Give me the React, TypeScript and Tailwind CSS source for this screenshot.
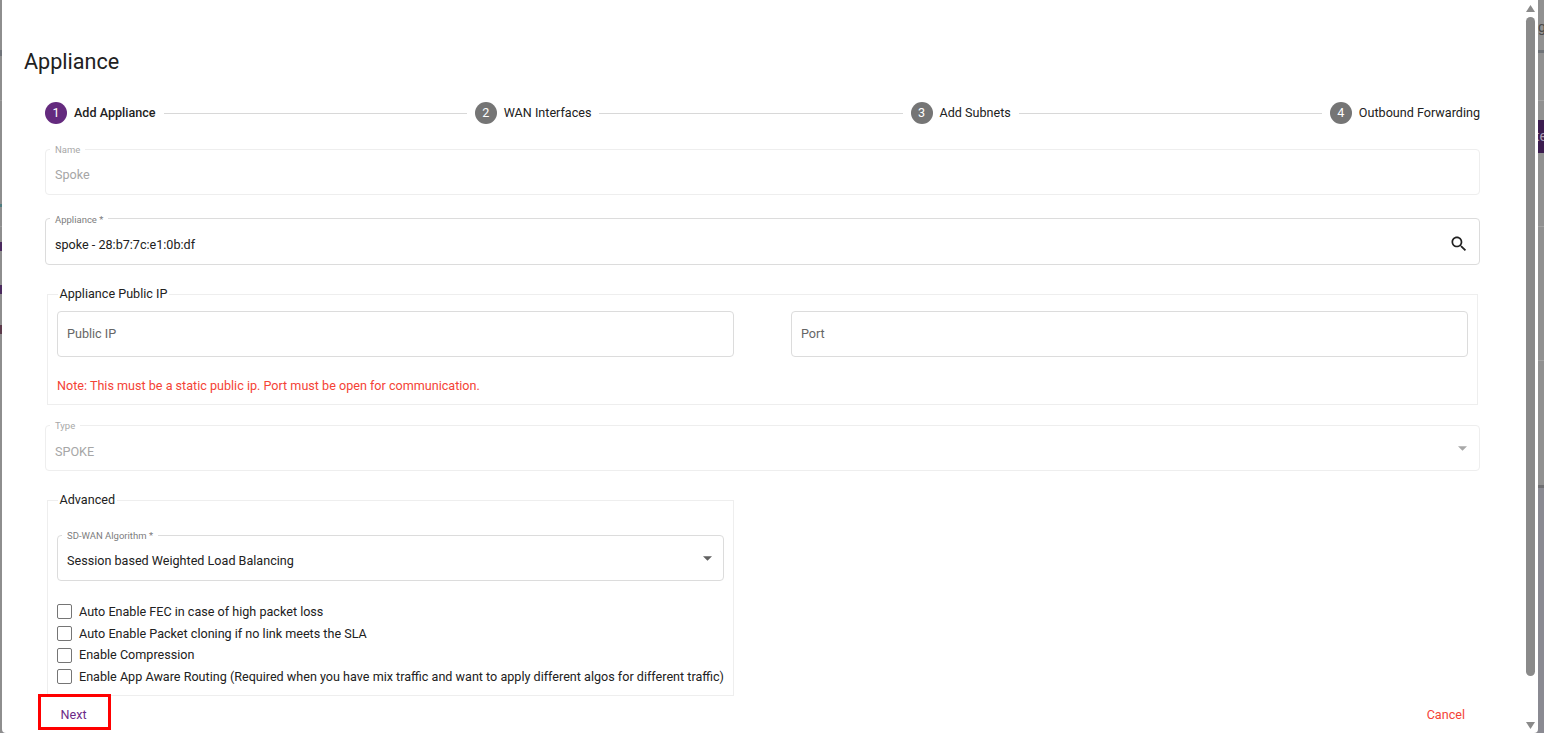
import React from "react";

function Step({ n, label, active }: { n: number; label: string; active?: boolean }) {
  return (
    <div className="flex items-center">
      <div className={active ? "flex h-[22px] w-[22px] items-center justify-center rounded-full bg-[#642a7e] text-[12.6px] text-white" : "flex h-[22px] w-[22px] items-center justify-center rounded-full bg-[#757575] text-[12.6px] text-white"}>{n}</div>
      <span className={active ? "ml-[7px] text-[12.6px] font-medium text-[#1f1f1f]" : "ml-[7px] text-[12.6px] text-[#212121]"}>{label}</span>
    </div>
  );
}

function Line() {
  return <div className="mx-2 h-px flex-1 bg-[#d8d8d8]" />;
}

function Outlined({ label, value, disabled, right, className, valueClass, legendClass }: { label?: string; value: string; disabled?: boolean; right?: React.ReactNode; className?: string; valueClass?: string; legendClass?: string }) {
  return (
    <fieldset className={`flex items-center rounded-[4px] border px-[9px] ${disabled ? "border-[#eeeeee]" : "border-[#dcdcdc]"} ${className ?? ""}`}>
      {label && <legend className={`-ml-[5px] px-[5px] text-[9.5px] leading-[10px] ${legendClass ?? "translate-y-px"} ${disabled ? "text-[#a8a8a8]" : "text-[#7d7d7d]"}`}>{label}</legend>}
      <span className={`flex-1 text-[12.6px] ${valueClass ?? ""} ${disabled ? "text-[#a6a6a6]" : label ? "text-[#212121]" : "text-[#666666]"}`}>{value}</span>
      {right}
    </fieldset>
  );
}

function Check({ label }: { label: string }) {
  return (
    <label className="flex h-[21.7px] items-center">
      <span className="h-[15px] w-[15px] rounded-[2px] border border-[#757575] bg-white" />
      <span className="ml-[7px] whitespace-nowrap pt-px text-[12.6px] text-[#212121]">{label}</span>
    </label>
  );
}

function Caret({ color, className }: { color: string; className?: string }) {
  return (
    <svg width="9" height="5" viewBox="0 0 10 5" className={`shrink-0 ${className ?? ""}`}>
      <path d="M0 0h10L5 5z" fill={color} />
    </svg>
  );
}

export default function App() {
  return (
    <div className="flex h-[733px] w-[1544px] overflow-hidden bg-[#8c8c90] font-['Roboto',sans-serif]">
      <div className="flex h-[733px] w-[2px] shrink-0 flex-col bg-[#8e8e8e]">
        <div className="mt-[50px] h-[6px] bg-[#70747a]" />
        <div className="mt-[44px] h-px bg-[#9c9c9c]" />
        <div className="mt-[103px] h-[3px] bg-[#4f7d80]" />
        <div className="mt-[19px] h-px bg-[#9c9c9c]" />
        <div className="mt-[15px] h-[9px] bg-[#4a2a5e]" />
        <div className="mt-[34px] h-[9px] bg-[#4a2a5e]" />
        <div className="mt-[31px] h-[9px] bg-[#5c3a4a]" />
      </div>
      <div className="flex h-[733px] w-[1536px] shrink-0 rounded-b-[4px] bg-white">
        <main className="w-[1524px] pl-[43px] pr-[46px]">
          <h1 className="-ml-[21px] pt-[47px] text-[21.6px] leading-[30px] text-[#212121]">Appliance</h1>
          <div className="mt-[25px] flex h-[22px] items-center">
            <Step n={1} label="Add Appliance" active />
            <Line />
            <Step n={2} label="WAN Interfaces" />
            <Line />
            <Step n={3} label="Add Subnets" />
            <Line />
            <Step n={4} label="Outbound Forwarding" />
          </div>
          <Outlined label="Name" value="Spoke" disabled valueClass="pt-[2px]" className="mt-[20px] h-[51px]" />
          <Outlined
            label="Appliance *"
            value="spoke - 28:b7:7c:e1:0b:df"
            valueClass="pt-[4px]"
            legendClass="translate-y-[2px]"
            className="mt-[18px] h-[52px]"
            right={
              <svg width="20" height="20" viewBox="0 0 24 24" className="mr-px shrink-0" fill="#212121">
                <path d="M15.5 14h-.79l-.28-.27C15.41 12.59 16 11.11 16 9.5 16 5.91 13.09 3 9.5 3S3 5.91 3 9.5 5.91 16 9.5 16c1.61 0 3.09-.59 4.23-1.57l.27.28v.79l5 4.99L20.49 19l-4.99-5zm-6 0C7.01 14 5 11.99 5 9.5S7.01 5 9.5 5 14 7.01 14 9.5 11.99 14 9.5 14z" />
              </svg>
            }
          />
          <fieldset className="mx-[2px] mt-[22px] h-[118px] border border-[#eeeeee] px-[9px]">
            <legend className="ml-[1px] -translate-y-px px-[1.5px] text-[12.6px] leading-[15px] text-[#212121]">Appliance Public IP</legend>
            <div className="mt-[9px] flex gap-[57px]">
              <Outlined value="Public IP" className="h-[46px] flex-1" />
              <Outlined value="Port" className="h-[46px] flex-1" />
            </div>
            <p className="mt-[21px] text-[12.6px] leading-[16px] text-[#f44336]">Note: This must be a static public ip. Port must be open for communication.</p>
          </fieldset>
          <Outlined label="Type" value="SPOKE" disabled valueClass="pt-[4px]" className="mt-[15px] h-[51px]" right={<Caret color="#a8a8a8" className="mb-[3px] mr-[3px]" />} />
          <fieldset className="mx-[2px] mt-[22px] h-[203px] w-[687px] border border-[#eeeeee] px-[9px]">
            <legend className="ml-[1px] -translate-y-px px-[1.5px] text-[12.6px] leading-[15px] text-[#212121]">Advanced</legend>
            <Outlined label="SD-WAN Algorithm *" value="Session based Weighted Load Balancing" valueClass="pt-[2px]" className="mt-[22px] h-[51px]" right={<Caret color="#616161" className="mb-[4px] mr-[2px]" />} />
            <div className="mt-[20px]">
              <Check label="Auto Enable FEC in case of high packet loss" />
              <Check label="Auto Enable Packet cloning if no link meets the SLA" />
              <Check label="Enable Compression" />
              <Check label="Enable App Aware Routing (Required when you have mix traffic and want to apply different algos for different traffic)" />
            </div>
          </fieldset>
          <div className="relative -mt-[2px] flex items-center justify-between">
            <button className="-ml-[7px] h-[36px] w-[73px] border-[3px] border-[#ff0000] pr-[2px] pt-[6px] text-[12.6px] text-[#6d2a88]">Next</button>
            <button className="mr-[15px] h-[36px] pt-[6px] text-[12.6px] text-[#f44336]">Cancel</button>
          </div>
        </main>
        <aside className="flex w-[12px] flex-col items-start pt-[5px]">
          <svg width="9" height="7" viewBox="0 0 9 7"><path d="M4.5 0 9 7H0z" fill="#8a8a8a" /></svg>
          <div className="mt-[5px] h-[659px] w-[9px] rounded-full bg-[#8a8a8a]" />
          <div className="flex-1" />
          <svg width="9" height="7" viewBox="0 0 9 7" className="mb-[4px]"><path d="M0 0h9L4.5 7z" fill="#8a8a8a" /></svg>
        </aside>
      </div>
      <div className="flex h-[733px] w-[6px] shrink-0 flex-col overflow-hidden bg-[#919191]">
        <div className="mt-[18px] h-[18px] text-[14px] leading-[18px] text-[#4a4a4a]">g</div>
        <div className="mt-[14px] h-[3px] bg-[#6f7378]" />
        <div className="mt-[47px] h-px bg-[#a2a2a2]" />
        <div className="mt-[19px] h-[33px] overflow-hidden whitespace-nowrap bg-[#3b1c4f] text-[14px] leading-[33px] text-[#a99bb0]"><span className="-ml-[3px] inline-block">te</span></div>
        <div className="mt-[73px] h-px bg-[#a2a2a2]" />
        <div className="mt-[133px] h-px bg-[#a2a2a2]" />
        <div className="mt-[124px] h-[3px] bg-[#6f6f72]" />
        <div className="flex-1 bg-[#8a8a92]" />
      </div>
    </div>
  );
}
